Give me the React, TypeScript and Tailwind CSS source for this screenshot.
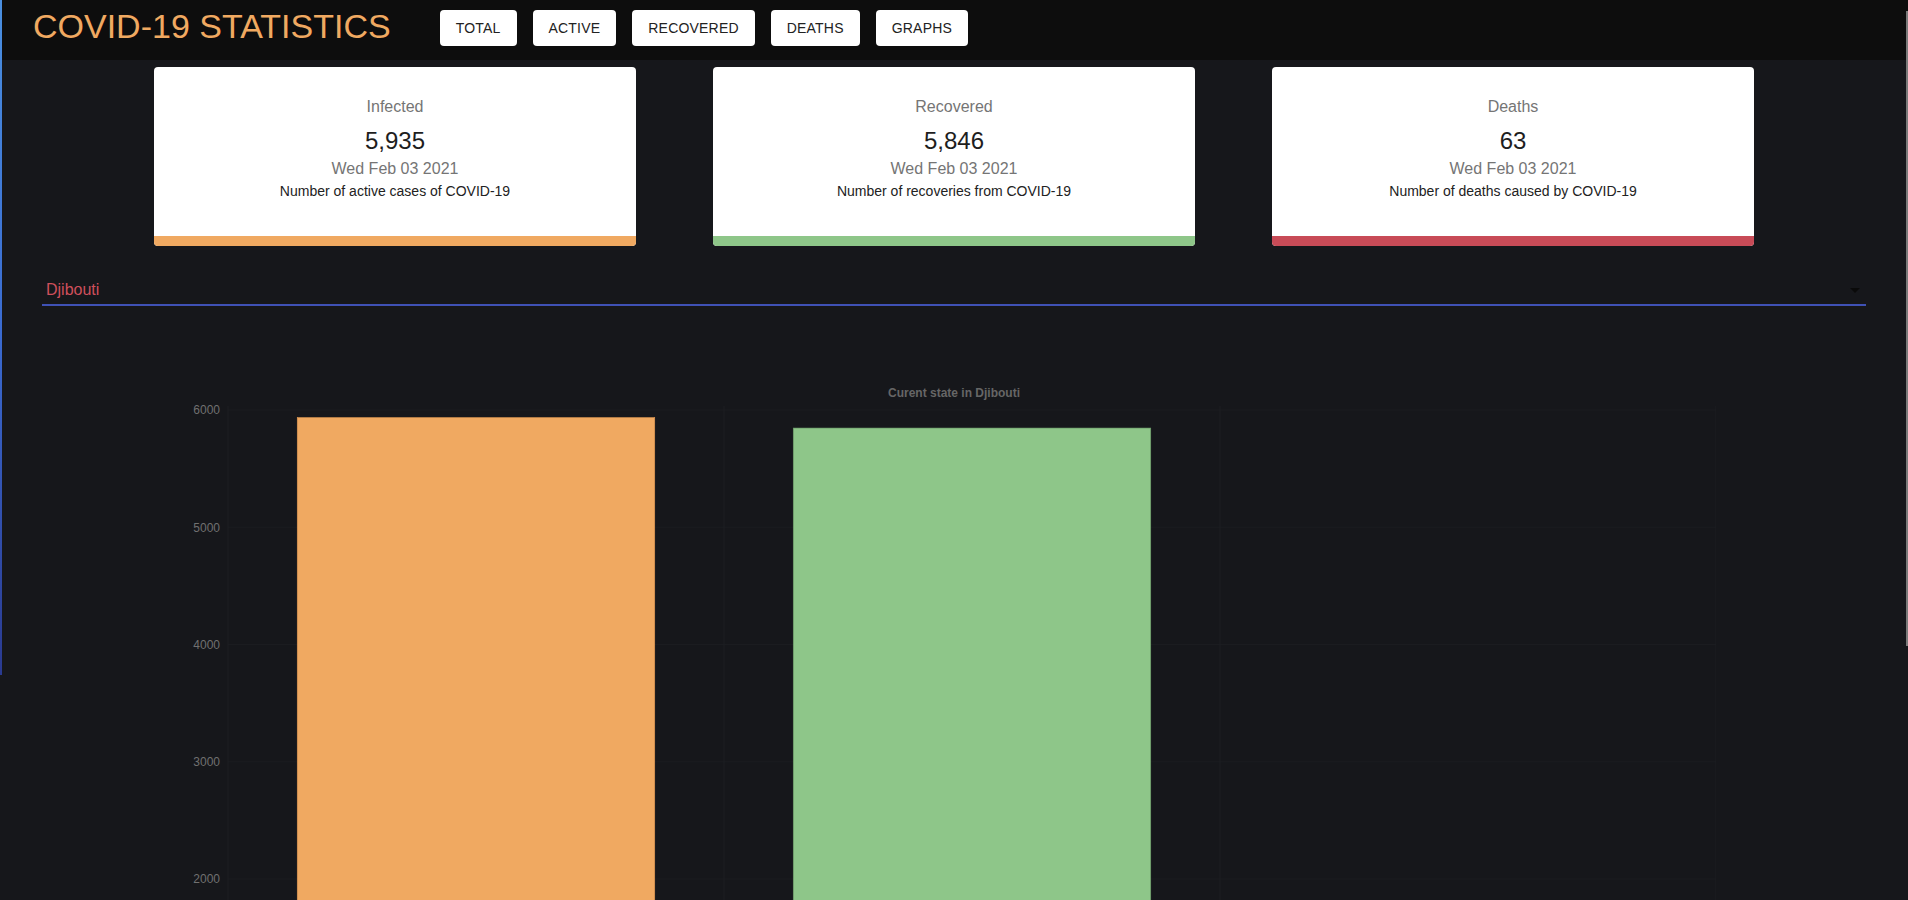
const stats = [
    { label: "Infected", value: "5,935", desc: "Number of active cases of COVID-19", bar: "bg-[#f0a961]" },
    { label: "Recovered", value: "5,846", desc: "Number of recoveries from COVID-19", bar: "bg-[#8ec689]" },
    { label: "Deaths", value: "63", desc: "Number of deaths caused by COVID-19", bar: "bg-[#c84b57]" },
];

const navItems = ["Total", "Active", "Recovered", "Deaths", "Graphs"];

// chart values (Djibouti)
const bars = [
    { value: 5935, color: "#f0a961", border: "#e39a52" },
    { value: 5846, color: "#8ec689", border: "#6f9f6b" },
    { value: 63, color: "#c84b57", border: "#b03d48" },
];

const Chart = () => {
    const top = 30;
    const perUnit = 117.25 / 1000;
    const bottom = top + 6000 * perUnit;
    const axisX = 36;
    const catW = 496;
    const barW = 357.5;
    const y = (v: number) => top + (6000 - v) * perUnit;

    return (
        <svg width={1524} height={760} className="block" style={{ fontFamily: "'Liberation Sans', Arial, sans-serif" }}>
            <text x={762} y={17} textAnchor="middle" fontSize={12} fontWeight="bold" fill="#666">
                Curent state in Djibouti
            </text>
            {[6000, 5000, 4000, 3000, 2000, 1000, 0].map((v) => (
                <g key={v}>
                    <line x1={axisX} x2={1524} y1={y(v)} y2={y(v)} stroke="#1b1c20" strokeWidth={1} />
                    <text x={28} y={y(v) + 4.3} textAnchor="end" fontSize={12} fill="#707070">
                        {v}
                    </text>
                </g>
            ))}
            {[0, 1, 2, 3].map((i) => (
                <line key={i} x1={axisX + i * catW} x2={axisX + i * catW} y1={top - 4} y2={bottom} stroke="#1d1e22" strokeWidth={1} />
            ))}
            {bars.map((b, i) => {
                const x = axisX + i * catW + (catW - barW) / 2;
                return (
                    <rect
                        key={i}
                        x={x}
                        y={y(b.value)}
                        width={barW}
                        height={bottom - y(b.value)}
                        fill={b.color}
                        stroke={b.border}
                        strokeWidth={0.6}
                    />
                );
            })}
        </svg>
    );
};

const App = () => {
    return (
        <div className="relative h-screen overflow-hidden bg-[#16171b] font-['Liberation_Sans',Arial,sans-serif]">
            {/* header */}
            <header className="flex items-start h-[60px] bg-[#0d0d0d] pl-[33px]">
                <h1 className="mt-[5px] leading-[42px] text-[34px] text-[#f0a961] mr-[49px] whitespace-nowrap">
                    COVID-19 STATISTICS
                </h1>
                <nav className="flex gap-[16px] mt-[10px]">
                    {navItems.map((item) => (
                        <button
                            key={item}
                            className="h-[36px] px-[16px] rounded bg-white text-[#222] text-[14px] uppercase tracking-[0.2px]"
                        >
                            {item}
                        </button>
                    ))}
                </nav>
            </header>

            {/* cards */}
            <div className="flex justify-center gap-[77px] pt-[7px]">
                {stats.map((s) => (
                    <div key={s.label} className="w-[482px] h-[179px] rounded bg-white overflow-hidden flex flex-col">
                        <div className="flex-1 flex flex-col items-center pt-[28px]">
                            <p className="text-[16px] leading-[24px] text-[#757575] mb-[5.6px]">{s.label}</p>
                            <p className="text-[24px] leading-[32px] text-[#1e1e1e]">{s.value}</p>
                            <p className="text-[16px] leading-[24px] text-[#757575]">Wed Feb 03 2021</p>
                            <p className="text-[14px] leading-[20px] text-[#222]">{s.desc}</p>
                        </div>
                        <div className={`h-[10px] ${s.bar}`} />
                    </div>
                ))}
            </div>

            {/* country select */}
            <div className="mx-[42px] mt-[29px] h-[31px] flex items-center justify-between pl-[4px] border-b-2 border-[#3f51b5]">
                <span className="text-[16px] text-[#cf4f5b]">Djibouti</span>
                <svg width="24" height="24" viewBox="0 0 24 24" className="mr-[-1px]">
                    <path d="M7 10l5 5 5-5z" fill="#0a0a0a" />
                </svg>
            </div>

            {/* chart */}
            <div className="flex justify-center mt-[74px]">
                <Chart />
            </div>

            {/* window edge + scrollbar thumb */}
            <div className="absolute left-0 top-0 w-[2px] h-[675px] bg-gradient-to-b from-[#4a8fe0] via-[#3a6ad0] to-[#2a3a90]" />
            <div className="absolute right-0 top-[11px] w-[2px] h-[635px] bg-[#7a7a7a]" />
        </div>
    );
};

export default App;
